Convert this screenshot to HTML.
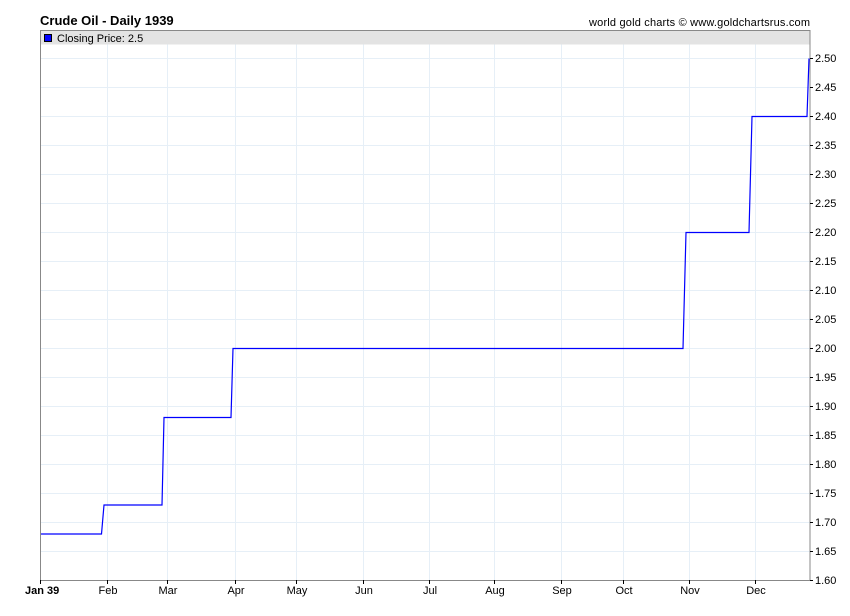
<!DOCTYPE html>
<html><head><style>
html,body{margin:0;padding:0;background:#fff;width:850px;height:616px;overflow:hidden}
svg text{font-family:"Liberation Sans",Arial,sans-serif}
</style></head><body>
<svg width="850" height="616" xmlns="http://www.w3.org/2000/svg">
<text x="40" y="25" font-size="13" font-weight="bold" fill="#000">Crude Oil - Daily 1939</text>
<text x="589" y="26" font-size="11" fill="#000" textLength="221">world gold charts © www.goldchartsrus.com</text>
<g stroke="#e6eff7" stroke-width="1">
<line x1="41" x2="810" y1="58.5" y2="58.5"/><line x1="41" x2="810" y1="87.5" y2="87.5"/><line x1="41" x2="810" y1="116.5" y2="116.5"/><line x1="41" x2="810" y1="145.5" y2="145.5"/><line x1="41" x2="810" y1="174.5" y2="174.5"/><line x1="41" x2="810" y1="203.5" y2="203.5"/><line x1="41" x2="810" y1="232.5" y2="232.5"/><line x1="41" x2="810" y1="261.5" y2="261.5"/><line x1="41" x2="810" y1="290.5" y2="290.5"/><line x1="41" x2="810" y1="319.5" y2="319.5"/><line x1="41" x2="810" y1="348.5" y2="348.5"/><line x1="41" x2="810" y1="377.5" y2="377.5"/><line x1="41" x2="810" y1="406.5" y2="406.5"/><line x1="41" x2="810" y1="435.5" y2="435.5"/><line x1="41" x2="810" y1="464.5" y2="464.5"/><line x1="41" x2="810" y1="493.5" y2="493.5"/><line x1="41" x2="810" y1="522.5" y2="522.5"/><line x1="41" x2="810" y1="551.5" y2="551.5"/>
<line x1="107.5" x2="107.5" y1="31" y2="580"/><line x1="167.5" x2="167.5" y1="31" y2="580"/><line x1="235.5" x2="235.5" y1="31" y2="580"/><line x1="296.5" x2="296.5" y1="31" y2="580"/><line x1="363.5" x2="363.5" y1="31" y2="580"/><line x1="429.5" x2="429.5" y1="31" y2="580"/><line x1="494.5" x2="494.5" y1="31" y2="580"/><line x1="561.5" x2="561.5" y1="31" y2="580"/><line x1="623.5" x2="623.5" y1="31" y2="580"/><line x1="689.5" x2="689.5" y1="31" y2="580"/><line x1="755.5" x2="755.5" y1="31" y2="580"/>
</g>
<rect x="40.5" y="30.5" width="769.5" height="14" fill="#e3e3e3"/>
<rect x="44.5" y="34.5" width="7" height="7" fill="#0000ff" stroke="#000" stroke-width="1"/>
<text x="57" y="42" font-size="11" fill="#000">Closing Price: 2.5</text>
<path d="M40.5 30.5 H810 V580.5 H40.5 Z" fill="none" stroke="#888" stroke-width="1"/>
<polyline fill="none" stroke="#0000ff" stroke-width="1.2" points="41,534 101.5,534 104,505 162,505 164,417.5 231,417.5 233,348.5 683,348.5 686,232.5 749,232.5 752,116.5 807,116.5 809,58.5"/>
<g stroke="#000" stroke-width="1">
<line x1="810" x2="813" y1="58.5" y2="58.5"/><line x1="810" x2="813" y1="87.5" y2="87.5"/><line x1="810" x2="813" y1="116.5" y2="116.5"/><line x1="810" x2="813" y1="145.5" y2="145.5"/><line x1="810" x2="813" y1="174.5" y2="174.5"/><line x1="810" x2="813" y1="203.5" y2="203.5"/><line x1="810" x2="813" y1="232.5" y2="232.5"/><line x1="810" x2="813" y1="261.5" y2="261.5"/><line x1="810" x2="813" y1="290.5" y2="290.5"/><line x1="810" x2="813" y1="319.5" y2="319.5"/><line x1="810" x2="813" y1="348.5" y2="348.5"/><line x1="810" x2="813" y1="377.5" y2="377.5"/><line x1="810" x2="813" y1="406.5" y2="406.5"/><line x1="810" x2="813" y1="435.5" y2="435.5"/><line x1="810" x2="813" y1="464.5" y2="464.5"/><line x1="810" x2="813" y1="493.5" y2="493.5"/><line x1="810" x2="813" y1="522.5" y2="522.5"/><line x1="810" x2="813" y1="551.5" y2="551.5"/><line x1="810" x2="813" y1="580.5" y2="580.5"/>
<line x1="40.5" x2="40.5" y1="580" y2="584"/><line x1="107.5" x2="107.5" y1="580" y2="584"/><line x1="167.5" x2="167.5" y1="580" y2="584"/><line x1="235.5" x2="235.5" y1="580" y2="584"/><line x1="296.5" x2="296.5" y1="580" y2="584"/><line x1="363.5" x2="363.5" y1="580" y2="584"/><line x1="429.5" x2="429.5" y1="580" y2="584"/><line x1="494.5" x2="494.5" y1="580" y2="584"/><line x1="561.5" x2="561.5" y1="580" y2="584"/><line x1="623.5" x2="623.5" y1="580" y2="584"/><line x1="689.5" x2="689.5" y1="580" y2="584"/><line x1="755.5" x2="755.5" y1="580" y2="584"/>
</g>
<g font-size="11" fill="#000">
<text x="815" y="62">2.50</text><text x="815" y="91">2.45</text><text x="815" y="120">2.40</text><text x="815" y="149">2.35</text><text x="815" y="178">2.30</text><text x="815" y="207">2.25</text><text x="815" y="236">2.20</text><text x="815" y="265">2.15</text><text x="815" y="294">2.10</text><text x="815" y="323">2.05</text><text x="815" y="352">2.00</text><text x="815" y="381">1.95</text><text x="815" y="410">1.90</text><text x="815" y="439">1.85</text><text x="815" y="468">1.80</text><text x="815" y="497">1.75</text><text x="815" y="526">1.70</text><text x="815" y="555">1.65</text><text x="815" y="584">1.60</text>
</g>
<text x="25" y="594" font-size="11" font-weight="bold" fill="#000">Jan 39</text>
<g font-size="11" fill="#000" text-anchor="middle">
<text x="108" y="594">Feb</text><text x="168" y="594">Mar</text><text x="236" y="594">Apr</text><text x="297" y="594">May</text><text x="364" y="594">Jun</text><text x="430" y="594">Jul</text><text x="495" y="594">Aug</text><text x="562" y="594">Sep</text><text x="624" y="594">Oct</text><text x="690" y="594">Nov</text><text x="756" y="594">Dec</text>
</g>
</svg>
</body></html>
